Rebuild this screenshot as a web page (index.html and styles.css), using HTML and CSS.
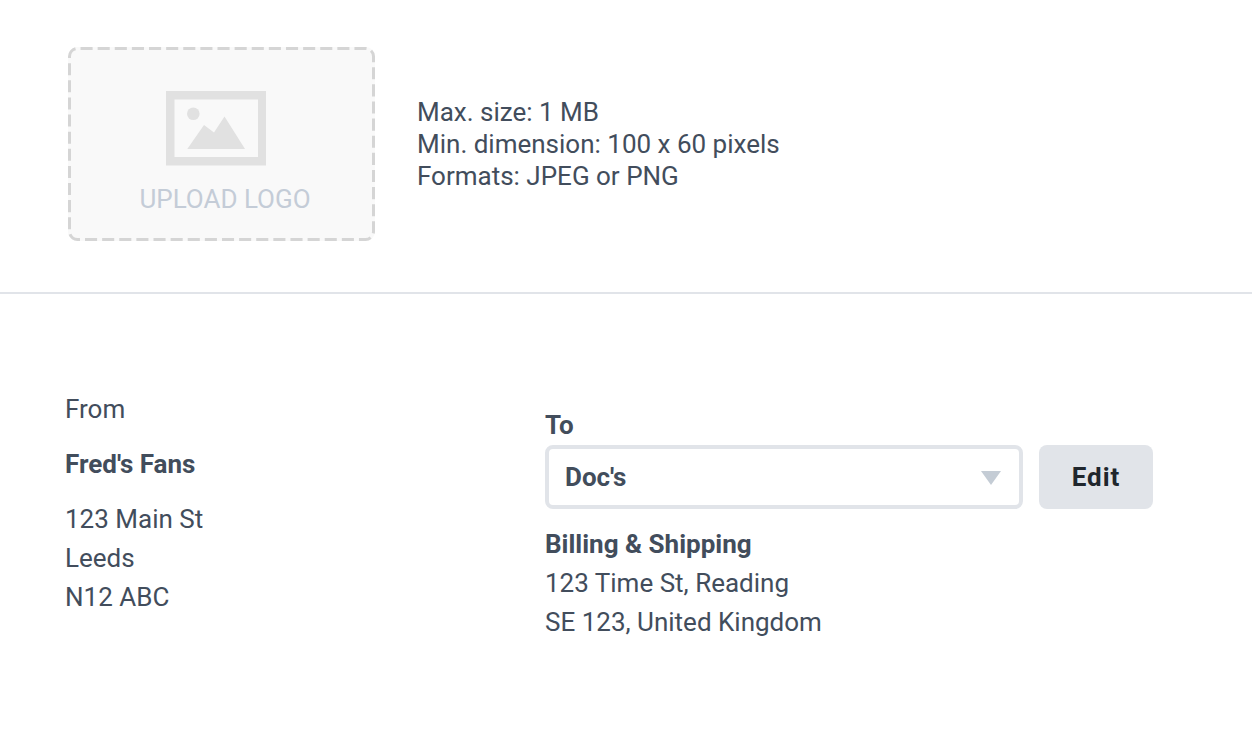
FILE: index.html
```html
<!DOCTYPE html>
<html lang="en">
<head>
<meta charset="utf-8">
<title>Invoice</title>
<link rel="stylesheet" href="styles.css">
</head>
<body>
<header class="branding">
  <button type="button" class="upload">
    <svg class="upload-outline" aria-hidden="true"><rect class="outline" x="1.5" y="1.5" rx="8" pathLength="969"/></svg>
    <svg class="upload-icon" viewBox="0 0 100 74" aria-hidden="true">
      <path fill-rule="evenodd" d="M0 0H100V74.500H0ZM8.500 8.500V66H92V8.500Z"/>
      <circle cx="27.300" cy="22.700" r="6.300"/>
      <path d="M21.300 58L38 34L48 41.500L58.500 25.500L79 58Z"/>
    </svg>
    <span>UPLOAD LOGO</span>
  </button>
  <p class="hints">Max. size: 1 MB<br>Min. dimension: 100 x 60 pixels<br>Formats: JPEG or PNG</p>
</header>
<main class="parties">
  <section class="from">
    <p class="row">From</p>
    <p class="row strong">Fred's Fans</p>
    <address>123 Main St<br>Leeds<br>N12 ABC</address>
  </section>
  <section class="to">
    <label class="strong" for="client">To</label>
    <div class="picker">
      <div class="select-wrap">
        <select id="client"><option>Doc's</option></select>
        <svg class="arrow" viewBox="0 0 20 14" aria-hidden="true"><path d="M0 0H20L10 14Z"/></svg>
      </div>
      <button type="button" class="edit">Edit</button>
    </div>
    <p class="strong">Billing &amp; Shipping</p>
    <address>123 Time St, Reading<br>SE 123, United Kingdom</address>
  </section>
</main>
</body>
</html>
```
FILE: styles.css
```css
* { box-sizing: border-box; }
body {
  margin: 0;
  background: #fff;
  color: #424d5c;
  font: 26px/39px Roboto, sans-serif;
}
p { margin: 0; }
address { font-style: normal; }
button, select { font: inherit; }
.strong { font-weight: 700; }
.branding {
  display: flex;
  align-items: center;
  gap: 42px;
  padding: 47px 68px 51px;
  border-bottom: 2px solid #e1e4e9;
}
.upload {
  position: relative;
  display: flex;
  flex-direction: column;
  align-items: center;
  gap: 15px;
  width: 307px;
  padding: 44px 0 22px 7px;
  border: 0;
  border-radius: 9px;
  background: #f9f9f9;
  color: #c4ccd7;
}
.upload-outline {
  position: absolute;
  inset: 0;
  width: 100%;
  height: 100%;
}
.outline {
  width: calc(100% - 3px);
  height: calc(100% - 3px);
  fill: none;
  stroke: #d5d5d5;
  stroke-width: 3px;
  stroke-dasharray: 12 5;
  stroke-dashoffset: -3px;
}
.upload-icon {
  width: 100px;
  height: 74px;
  margin-right: 18px;
  overflow: visible;
  fill: #e1e1e1;
}
.hints { line-height: 32px; }
.parties {
  display: grid;
  grid-template-columns: 480px 1fr;
  padding: 96px 99px 96px 65px;
}
.row { margin-bottom: 16px; }
.to { padding-top: 16px; }
.to label { display: block; }
.picker {
  display: flex;
  gap: 16px;
  margin-bottom: 16px;
}
.select-wrap {
  position: relative;
  flex: 1;
}
select {
  appearance: none;
  width: 100%;
  height: 64px;
  padding: 0 16px;
  border: 4px solid #e1e4e9;
  border-radius: 8px;
  background: #fff;
  color: inherit;
  font-weight: 700;
}
.arrow {
  position: absolute;
  top: 26px;
  right: 22px;
  width: 20px;
  height: 14px;
  fill: #c4ccd5;
  pointer-events: none;
}
.edit {
  width: 114px;
  height: 64px;
  border: 0;
  border-radius: 8px;
  background: #e1e4e9;
  color: #20262d;
  font-weight: 700;
  letter-spacing: 1px;
}
```
